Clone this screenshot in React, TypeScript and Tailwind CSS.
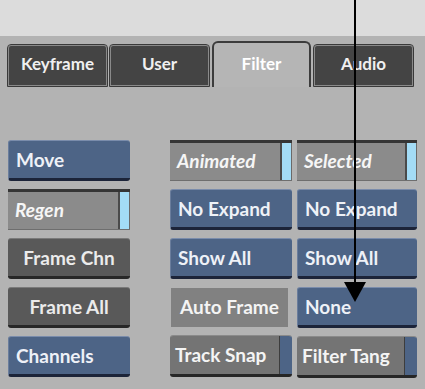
import React from 'react';

type Kind = 'blue' | 'dark' | 'toggle' | 'flat' | 'snap';

const txt = 'text-[19px] font-bold';

const Btn: React.FC<{ label: string; kind: Kind; w?: string }> = ({ label, kind, w = 'w-[122px]' }) => {
  if (kind === 'blue') {
    return (
      <div className={`${w} h-[41px] flex items-center pl-[7px] pt-[1px] rounded-[3px] bg-[#4d6486] border-t border-t-[#7a8cab] border-l border-l-[#6a7d9c] border-b-[3px] border-b-[#1c2439] text-[#eef1f7] ${txt}`}>
        {label}
      </div>
    );
  }
  if (kind === 'dark') {
    return (
      <div className={`${w} h-[41px] flex items-center justify-center pt-[1px] rounded-[3px] bg-[#595959] border-t border-t-[#7a7a7a] border-b-[3px] border-b-[#272727] text-[#ebebeb] ${txt}`}>
        {label}
      </div>
    );
  }
  if (kind === 'flat') {
    return (
      <div className={`${w} h-[39px] mt-[1px] ml-[1px] flex items-center justify-center bg-[#818181] text-[#f4f4f4] ${txt}`}>
        {label}
      </div>
    );
  }
  if (kind === 'snap') {
    return (
      <div className={`${w} h-[42px] flex rounded-[3px] border-t border-t-[#8a8a8a] border-b-[3px] border-b-[#262626] overflow-hidden`}>
        <div className={`flex-1 flex items-center pl-[5px] pt-[1px] bg-[#747474] text-[#f4f4f4] border-r border-r-[#3d3d3d] ${txt}`}>
          {label}
        </div>
        <div className="w-[12px] bg-[#4d6486]" />
      </div>
    );
  }
  return (
    <div className={`${w} h-[41px] flex border-t-[3px] border-t-[#353535] border-b border-b-[#6e6e6e]`}>
      <div className={`flex-1 flex items-center pl-[7px] bg-[#8b8b8b] text-[#f6f6f6] italic border-r-[2px] border-r-[#4a4a4a] ${txt}`}>
        {label}
      </div>
      <div className="w-[10px] bg-[#a3dcf6] border-r border-r-[#6a6a6a]" />
    </div>
  );
};

const Tab: React.FC<{ label: string; active?: boolean }> = ({ label, active }) =>
  active ? (
    <div className="w-[99px] h-[46px] -mb-[1px] flex items-center justify-center pb-[2px] rounded-t-[6px] border-2 border-b-0 border-[#3c3c3c] bg-[#b5b5b5] text-white text-[17px] font-bold">
      {label}
    </div>
  ) : (
    <div className="w-[99px] h-[41px] flex items-center justify-center pb-[3px] rounded-t-[3px] border border-[#8a8a8a] outline outline-1 outline-[#3a3a3a] bg-[#444444] text-[#f0f0f0] text-[17px] font-bold">
      {label}
    </div>
  );

export default function App() {
  return (
    <div className="relative w-[425px] h-[389px] overflow-hidden bg-[#b3b3b3] font-['Lato','Liberation_Sans',sans-serif]">
      <div className="h-[36px] bg-[#dcdcdc]" />
      <div className="flex items-end gap-[3px] pl-[8px] h-[50px]">
        <Tab label="Keyframe" />
        <Tab label="User" />
        <Tab label="Filter" active />
        <Tab label="Audio" />
      </div>
      <div className="flex pt-[54px] pl-[8px]">
        <div className="flex flex-col gap-[8px] w-[122px]">
          <Btn label="Move" kind="blue" />
          <Btn label="Regen" kind="toggle" />
          <Btn label="Frame Chn" kind="dark" />
          <Btn label="Frame All" kind="dark" />
          <Btn label="Channels" kind="blue" />
        </div>
        <div className="flex flex-col gap-[8px] ml-[40px]">
          <Btn label="Animated" kind="toggle" />
          <Btn label="No Expand" kind="blue" />
          <Btn label="Show All" kind="blue" />
          <Btn label="Auto Frame" kind="flat" w="w-[117px]" />
          <Btn label="Track Snap" kind="snap" />
        </div>
        <div className="flex flex-col gap-[8px] ml-[5px]">
          <Btn label="Selected" kind="toggle" w="w-[120px]" />
          <Btn label="No Expand" kind="blue" w="w-[120px]" />
          <Btn label="Show All" kind="blue" w="w-[120px]" />
          <Btn label="None" kind="blue" w="w-[120px]" />
          <Btn label="Filter Tang" kind="snap" w="w-[120px]" />
        </div>
      </div>
      <svg className="absolute left-0 top-0" width="425" height="389" viewBox="0 0 425 389">
        <line x1="355" y1="0" x2="355" y2="284" stroke="#000" strokeWidth="2" />
        <polygon points="344,282 366,282 355,302" fill="#000" />
      </svg>
    </div>
  );
}
